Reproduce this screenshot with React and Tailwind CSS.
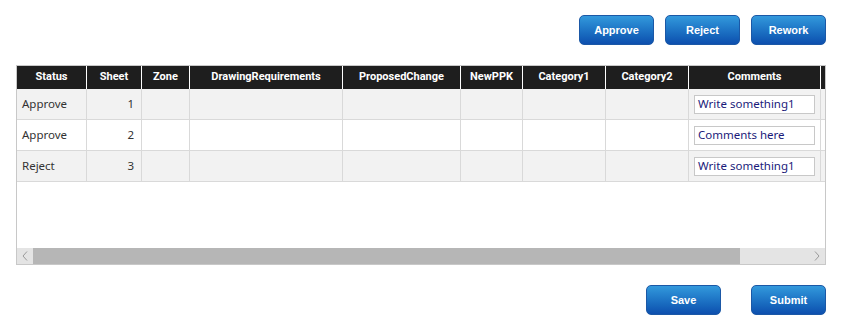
import React from "react";

const cols = [
  { name: "Status", w: 70 },
  { name: "Sheet", w: 55 },
  { name: "Zone", w: 48 },
  { name: "DrawingRequirements", w: 153 },
  { name: "ProposedChange", w: 118 },
  { name: "NewPPK", w: 62 },
  { name: "Category1", w: 83 },
  { name: "Category2", w: 83 },
  { name: "Comments", w: 132 },
  { name: "", w: 20 },
];

const rows = [
  { status: "Approve", sheet: "1", comment: "Write something1" },
  { status: "Approve", sheet: "2", comment: "Comments here" },
  { status: "Reject", sheet: "3", comment: "Write something1" },
];

function Btn({ children }) {
  return (
    <button
      className="h-[30px] w-[75px] rounded-[5px] border border-[#1b58a6] bg-gradient-to-b from-[#3399dc] to-[#0e4fae] text-[11px] font-bold text-white"
      style={{ fontFamily: "'Liberation Sans', Arial, sans-serif" }}
    >
      {children}
    </button>
  );
}

export default function App() {
  return (
    <div className="h-[326px] w-[846px] bg-white">
      <div className="flex justify-end gap-[11px] pr-5 pt-[15px]">
        <Btn>Approve</Btn>
        <Btn>Reject</Btn>
        <Btn>Rework</Btn>
      </div>
      <div className="ml-4 mt-[20px] flex h-[200px] w-[810px] flex-col overflow-hidden border border-[#c8c8c8]">
        <div className="flex-1 overflow-hidden">
          <div className="flex h-[23px] bg-[#1e1e1e]" style={{ fontFamily: "Roboto, sans-serif" }}>
            {cols.map((c, i) => (
              <div
                key={i}
                className="flex shrink-0 items-center justify-center border-r border-white text-[11px] font-bold text-white"
                style={{ width: c.w }}
              >
                {c.name}
              </div>
            ))}
          </div>
          {rows.map((r, ri) => (
            <div
              key={ri}
              className={`flex h-[31px] border-b border-[#d9d9d9] ${ri % 2 === 0 ? "bg-[#f2f2f2]" : "bg-white"}`}
              style={{ fontFamily: "'Noto Sans', sans-serif" }}
            >
              {cols.map((c, i) => (
                <div
                  key={i}
                  className="flex shrink-0 items-center border-r border-[#d9d9d9] text-[11.5px] text-[#333]"
                  style={{ width: c.w }}
                >
                  {i === 0 && <span className="pl-[5px]">{r.status}</span>}
                  {i === 1 && <span className="w-full pr-[7px] text-right">{r.sheet}</span>}
                  {i === 8 && (
                    <div className="mx-[5px] flex h-[19px] w-[121px] items-center border border-[#c8c8c8] bg-white pl-[3px] text-[11.5px] text-[#1a1a7a]">
                      {r.comment}
                    </div>
                  )}
                </div>
              ))}
            </div>
          ))}
        </div>
        <div className="flex h-4 bg-[#e4e4e4]">
          <div className="flex w-4 items-center justify-center">
            <svg width="6" height="10" viewBox="0 0 6 10">
              <path d="M5 0.5 L1 5 L5 9.5" fill="none" stroke="#9a9a9a" strokeWidth="1" />
            </svg>
          </div>
          <div className="w-[707px] bg-[#b6b6b6]" />
          <div className="flex-1" />
          <div className="flex w-4 items-center justify-center">
            <svg width="6" height="10" viewBox="0 0 6 10">
              <path d="M1 0.5 L5 5 L1 9.5" fill="none" stroke="#9a9a9a" strokeWidth="1" />
            </svg>
          </div>
        </div>
      </div>
      <div className="mt-5 flex justify-end gap-[30px] pr-5">
        <Btn>Save</Btn>
        <Btn>Submit</Btn>
      </div>
    </div>
  );
}
